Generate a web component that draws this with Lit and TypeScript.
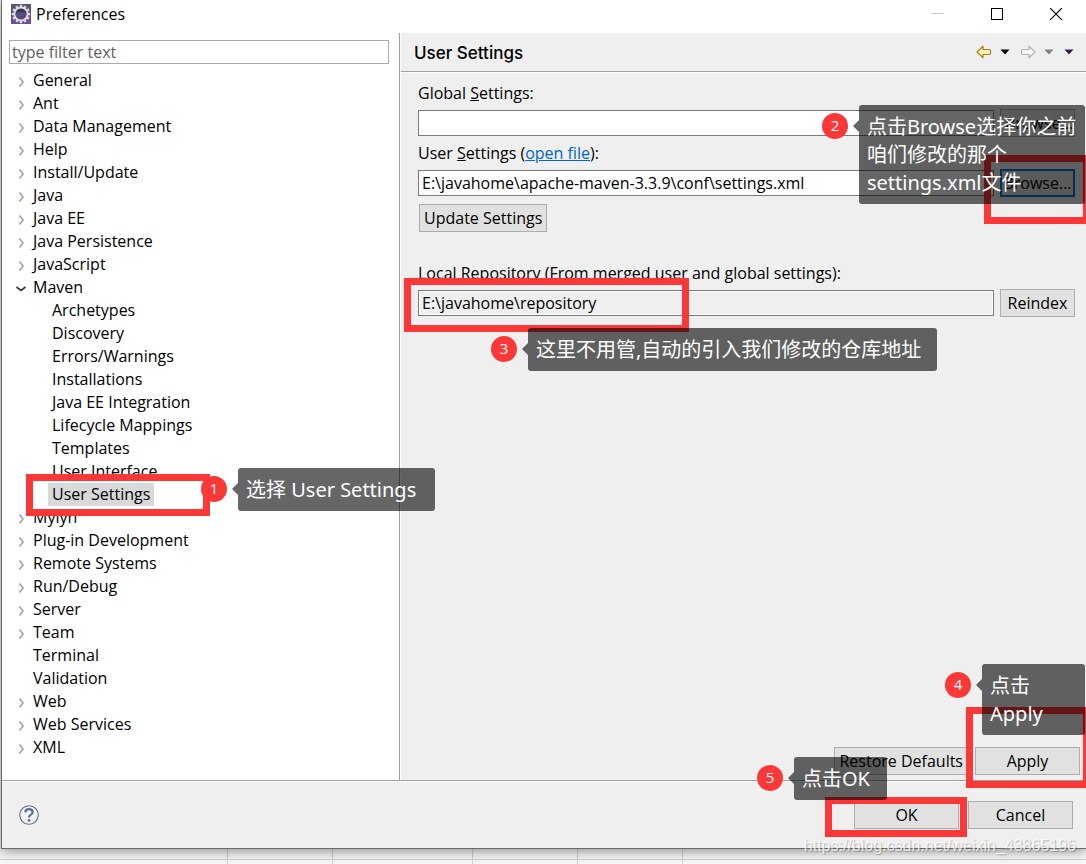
import { LitElement, html, css, svg } from "lit";
import { customElement, state } from "lit/decorators.js";
import { classMap } from "lit/directives/class-map.js";

interface Page {
  name: string;
  leaf?: boolean;
  children?: string[];
}

const PAGES: Page[] = [
  { name: "General" },
  { name: "Ant" },
  { name: "Data Management" },
  { name: "Help" },
  { name: "Install/Update" },
  { name: "Java" },
  { name: "Java EE" },
  { name: "Java Persistence" },
  { name: "JavaScript" },
  {
    name: "Maven",
    children: [
      "Archetypes",
      "Discovery",
      "Errors/Warnings",
      "Installations",
      "Java EE Integration",
      "Lifecycle Mappings",
      "Templates",
      "User Interface",
      "User Settings",
    ],
  },
  { name: "Mylyn" },
  { name: "Plug-in Development" },
  { name: "Remote Systems" },
  { name: "Run/Debug" },
  { name: "Server" },
  { name: "Team" },
  { name: "Terminal", leaf: true },
  { name: "Validation", leaf: true },
  { name: "Web" },
  { name: "Web Services" },
  { name: "XML" },
];

@customElement("preference-tree")
class PreferenceTree extends LitElement {
  @state() private selected = "User Settings";

  static styles = css`
    :host {
      display: block;
    }
    .list {
      list-style: none;
      margin: 0;
      padding: 0;
    }
    .row {
      display: flex;
      align-items: center;
      height: 23px;
    }
    .twist {
      width: 12px;
      height: 12px;
      flex: none;
      margin: 2px 2px 0 6px;
      fill: none;
      stroke: #a0a0a0;
      stroke-width: 1.6;
    }
    .open {
      stroke: #333;
    }
    .name {
      font: inherit;
      color: inherit;
      line-height: 23px;
      height: 23px;
      border: 0;
      margin: 0;
      padding: 0 4px;
      background: none;
      white-space: nowrap;
    }
    .nested {
      padding-left: 39px;
    }
    .selected {
      background: #d9d9d9;
    }
  `;

  private item(name: string) {
    return html`<button
      class=${classMap({ name: true, selected: this.selected === name })}
      @click=${() => (this.selected = name)}
    >${name}</button>`;
  }

  private twist(page: Page) {
    const path = page.leaf ? "" : page.children ? "M1.5 4 L6 7.5 L10.5 4" : "M4.5 1.5 L8 6 L4.5 10.5";
    return html`<svg class=${classMap({ twist: true, open: !!page.children })} viewBox="0 0 12 12">
      ${svg`<path d=${path} />`}
    </svg>`;
  }

  render() {
    return html`<ul class="list">
      ${PAGES.map(
        (page) => html`<li>
          <div class="row">${this.twist(page)}${this.item(page.name)}</div>
          ${page.children
            ? html`<ul class="list nested">
                ${page.children.map((c) => html`<li class="row">${this.item(c)}</li>`)}
              </ul>`
            : ""}
        </li>`
      )}
    </ul>`;
  }
}

@customElement("step-note")
class StepNote extends LitElement {
  static properties = { step: { type: Number } };
  declare step: number;

  static styles = css`
    :host {
      display: flex;
      align-items: flex-start;
    }
    .dot {
      flex: none;
      width: 26px;
      height: 26px;
      margin-top: 8px;
      border-radius: 50%;
      background: #fb3838;
      color: #fff;
      font: 15px/24px "Open Sans", "Noto Sans", sans-serif;
      text-align: center;
    }
    .arrow {
      flex: none;
      width: 6px;
      height: 12px;
      margin: 15px 0 0 5px;
      background: rgba(0, 0, 0, 0.6);
      clip-path: polygon(100% 0, 0 50%, 100% 100%);
    }
    .bubble {
      flex: 1;
      padding: 8px 8px 7px;
      border-radius: 3px;
      background: rgba(0, 0, 0, 0.6);
      color: #fff;
      font: 20px/28px "Noto Sans", "Noto Sans CJK SC", sans-serif;
    }
  `;

  render() {
    return html`<span class="dot">${this.step}</span><span class="arrow"></span
      ><span class="bubble"><slot></slot></span>`;
  }
}

@customElement("app-root")
class AppRoot extends LitElement {
  static styles = css`
    :host {
      position: relative;
      min-height: 100vh;
      box-sizing: border-box;
      overflow: hidden;
      color: #000;
      font: 16px/20px "Open Sans", "Noto Sans CJK SC", sans-serif;
      background: #f8f8f8;
      display: flex;
      flex-direction: column;
    }
    .window {
      flex: 1;
      display: flex;
      flex-direction: column;
      margin-left: 1px;
      border-left: 1px solid #6a6a6a;
      border-bottom: 1px solid #6a6a6a;
      background: #efefef;
      box-shadow: 0 2px 12px rgba(0, 0, 0, 0.45);
      z-index: 0;
    }
    .titlebar {
      display: flex;
      align-items: center;
      height: 33px;
      box-sizing: border-box;
      padding: 0 24px 5px 9px;
      background: #fff;
    }
    .title {
      flex: 1;
      margin: 0 0 0 5px;
      font: inherit;
    }
    .logo {
      width: 20px;
      height: 20px;
    }
    .caption {
      display: flex;
      gap: 47px;
    }
    .plain {
      display: block;
      padding: 0;
      border: 0;
      background: none;
    }
    .plain svg {
      display: block;
    }
    .body {
      flex: 1;
      display: grid;
      grid-template-columns: 398px 1fr;
      border-bottom: 1px solid #a0a0a0;
    }
    .side {
      border-right: 1px solid #a0a0a0;
      background: #fff;
      padding: 7px 10px 0 7px;
    }
    .filter {
      display: block;
      width: 100%;
      height: 24px;
      box-sizing: border-box;
      margin: 0 0 5px;
      padding: 0 2px;
      border: 1px solid #ababaf;
      font: inherit;
    }
    .filter::placeholder {
      color: #606060;
      opacity: 1;
    }
    .main {
      display: flex;
      flex-direction: column;
      min-width: 0;
      border-left: 1px solid #fff;
    }
    .head {
      display: flex;
      align-items: center;
      height: 38px;
      padding: 0 12px 0 13px;
      border-bottom: 1px solid #a0a0a0;
      box-shadow: 0 1px #fff;
    }
    .head-title {
      flex: 1;
      margin: 2px 0 0;
      font: 500 17px/24px Inter, Roboto, sans-serif;
    }
    .nav {
      display: flex;
      align-items: center;
      gap: 8px;
    }
    .history {
      margin-right: 2px;
    }
    .form {
      flex: 1;
      display: flex;
      flex-direction: column;
      padding: 11px 11px 5px 17px;
    }
    .line {
      display: flex;
      align-items: center;
      gap: 6px;
      height: 28px;
    }
    .label {
      height: 20px;
      margin: 0 0 6px;
    }
    .label + .line + .label {
      margin-top: 6px;
    }
    .link {
      color: #0066cc;
    }
    .field {
      flex: 1;
      min-width: 0;
      height: 26px;
      box-sizing: border-box;
      padding: 0 3px;
      border: 1px solid #7a7a7a;
      background: #fff;
      color: inherit;
      font: inherit;
    }
    .readonly {
      background: #efefef;
      box-shadow: inset 0 0 0 1px #fff;
    }
    .button {
      height: 28px;
      box-sizing: border-box;
      padding: 0 4px;
      border: 1px solid #adadad;
      background: #e1e1e1;
      color: inherit;
      font: inherit;
      white-space: nowrap;
    }
    .small {
      width: 75px;
    }
    .wide {
      width: 105px;
    }
    .focus {
      padding: 0;
      border: 2px solid #0078d7;
    }
    .update {
      align-self: flex-start;
      margin: 7px 0 31px 1px;
    }
    .actions {
      display: flex;
      justify-content: flex-end;
      gap: 7px;
      margin-top: auto;
      margin-right: -5px;
    }
    .footer {
      display: flex;
      align-items: center;
      height: 66px;
      padding: 0 13px 0 17px;
      border-top: 1px solid #fff;
    }
    .help {
      margin-right: auto;
    }
    .footer .button {
      margin-left: 9px;
    }
    .desktop {
      height: 15px;
      background: 
        linear-gradient(#d0d0d0, #d0d0d0) 227px 0 / 1px 100% no-repeat,
        linear-gradient(#d0d0d0, #d0d0d0) 332px 0 / 1px 100% no-repeat,
        linear-gradient(#d0d0d0, #d0d0d0) 472px 0 / 1px 100% no-repeat,
        linear-gradient(#d0d0d0, #d0d0d0) 577px 0 / 1px 100% no-repeat,
        linear-gradient(#d0d0d0, #d0d0d0) 682px 0 / 1px 100% no-repeat,
        linear-gradient(#d0d0d0, #d0d0d0) 0 10px / 100% 1px no-repeat;
    }
    .mark {
      position: absolute;
      box-sizing: border-box;
      border: 7px solid #fb3838;
      z-index: 1;
    }
    .note {
      position: absolute;
      z-index: 2;
    }
    .mark1 { left: 26px; top: 474px; width: 184px; height: 42px; }
    .mark2 { right: -4px; top: 155px; width: 106px; height: 69px; }
    .mark3 { left: 404px; top: 278px; width: 285px; height: 54px; }
    .mark4 { right: -4px; bottom: 76px; width: 124px; height: 81px; }
    .mark5 { right: 119px; bottom: 27px; width: 142px; height: 40px; }
    .note1 { left: 201px; top: 468px; width: 234px; }
    .note2 { right: 1px; top: 105px; width: 263px; }
    .note3 { left: 491px; top: 328px; width: 446px; }
    .note4 { right: 1px; top: 664px; width: 140px; }
    .note5 { right: 199px; top: 757px; width: 130px; }
    .watermark {
      position: absolute;
      right: 10px;
      bottom: 8px;
      z-index: 3;
      color: rgba(255, 255, 255, 0.8);
      font: 16px/20px "Liberation Sans", sans-serif;
      text-shadow: 1px 1px 1px rgba(0, 0, 0, 0.25);
    }
  `;

  private logo() {
    const teeth = Array.from({ length: 12 }, (_, i) => i * 30);
    return html`<svg class="logo" viewBox="0 0 20 20" aria-hidden="true">
      <defs>
        <linearGradient id="sq" x1="0" y1="0" x2="0" y2="1">
          <stop offset="0" stop-color="#5a5468" />
          <stop offset="1" stop-color="#6c4f9c" />
        </linearGradient>
        <linearGradient id="orb" x1="0" y1="0" x2="0" y2="1">
          <stop offset="0" stop-color="#2f2b48" />
          <stop offset="1" stop-color="#5d5590" />
        </linearGradient>
      </defs>
      <rect width="20" height="20" fill="url(#sq)" />
      ${teeth.map((a) => svg`<rect x="8.8" y="0.8" width="2.4" height="3" fill="#dedade" transform="rotate(${a} 10 10)" />`)}
      <circle cx="10" cy="10" r="6.6" fill="url(#orb)" stroke="#dedade" stroke-width="2" />
      <path d="M4.5 9.2h11M4.5 11.2h11" stroke="#71689c" stroke-width="0.7" />
    </svg>`;
  }

  private caret(color: string) {
    return html`<svg width="10" height="6" viewBox="0 0 10 6"><path d="M0.5 0.5h9L5 5.5z" fill=${color} /></svg>`;
  }

  render() {
    return html`
      <div class="window">
        <header class="titlebar">
          ${this.logo()}
          <h1 class="title">Preferences</h1>
          <div class="caption">
            <button class="plain" aria-label="Minimize">
              <svg width="12" height="12"><path d="M0 5.5h12" stroke="#c8c8c8" /></svg>
            </button>
            <button class="plain" aria-label="Maximize">
              <svg width="12" height="12"><rect x="0.5" y="0.5" width="11" height="11" fill="none" stroke="#000" /></svg>
            </button>
            <button class="plain" aria-label="Close">
              <svg width="12" height="12"><path d="M0 0L12 12M12 0L0 12" stroke="#000" stroke-width="1.2" /></svg>
            </button>
          </div>
        </header>
        <div class="body">
          <nav class="side">
            <input class="filter" placeholder="type filter text" aria-label="type filter text" />
            <preference-tree></preference-tree>
          </nav>
          <main class="main">
            <div class="head">
              <h2 class="head-title">User Settings</h2>
              <div class="nav">
                <button class="plain" aria-label="Back">
                  <svg width="16" height="14" viewBox="0 0 16 14">
                    <path d="M1 7L7 1.2V4.5H13.2Q14.5 4.5 14.5 5.8V8.4Q14.5 9.5 13.2 9.5H7V12.8Z" fill="#fff4b8" stroke="#b37b12" stroke-width="1.2" stroke-linejoin="round" />
                  </svg>
                </button>
                <button class="plain history" aria-label="Back history">${this.caret("#000")}</button>
                <button class="plain" aria-label="Forward">
                  <svg width="16" height="14" viewBox="0 0 16 14">
                    <path d="M15 7L9 1.2V4.5H2.8Q1.5 4.5 1.5 5.8V8.4Q1.5 9.5 2.8 9.5H9V12.8Z" fill="#f4f4f4" stroke="#b4b4b4" stroke-width="1.2" stroke-linejoin="round" />
                  </svg>
                </button>
                <button class="plain history" aria-label="Forward history">${this.caret("#808080")}</button>
                <button class="plain" aria-label="Menu">${this.caret("#2f1f56")}</button>
              </div>
            </div>
            <div class="form">
              <label class="label" for="global">Global <u>S</u>ettings:</label>
              <div class="line">
                <input class="field" id="global" />
                <button class="button small">Browse...</button>
              </div>
              <label class="label" for="user">User <u>S</u>ettings (<a class="link" href="#">open file</a>):</label>
              <div class="line">
                <input class="field" id="user" .value=${"E:\\javahome\\apache-maven-3.3.9\\conf\\settings.xml"} />
                <button class="button small focus">Browse...</button>
              </div>
              <button class="button update">Update Settings</button>
              <label class="label" for="repo">Local Repository (From merged user and global settings):</label>
              <div class="line">
                <input class="field readonly" id="repo" readonly .value=${"E:\\javahome\\repository"} />
                <button class="button small">Reindex</button>
              </div>
              <div class="actions">
                <button class="button">Restore Defaults</button>
                <button class="button wide">Apply</button>
              </div>
            </div>
          </main>
        </div>
        <footer class="footer">
          <button class="plain help" aria-label="Help">
            <svg width="20" height="20" viewBox="0 0 20 20" fill="none" stroke="#5b6b93">
              <circle cx="10" cy="10" r="9.3" fill="#f4f4f6" stroke-width="1.1" />
              <path d="M6.3 7.4Q6.6 4.2 10 4.2Q13.6 4.2 13.6 7.2Q13.6 8.8 11.6 9.9Q10 10.8 10 12.6" stroke-width="2.2" />
              <circle cx="10" cy="15.4" r="1.4" fill="#5b6b93" stroke="none" />
            </svg>
          </button>
          <button class="button wide">OK</button>
          <button class="button wide">Cancel</button>
        </footer>
      </div>
      <div class="desktop"></div>

      <div class="mark mark1"></div>
      <div class="mark mark2"></div>
      <div class="mark mark3"></div>
      <div class="mark mark4"></div>
      <div class="mark mark5"></div>
      <step-note class="note note1" step="1">选择 User Settings</step-note>
      <step-note class="note note2" step="2">点击Browse选择你之前咱们修改的那个settings.xml文件</step-note>
      <step-note class="note note3" step="3">这里不用管,自动的引入我们修改的仓库地址</step-note>
      <step-note class="note note4" step="4">点击<br />Apply</step-note>
      <step-note class="note note5" step="5">点击OK</step-note>
      <span class="watermark">https://blog.csdn.net/weixin_43865196</span>
    `;
  }
}
